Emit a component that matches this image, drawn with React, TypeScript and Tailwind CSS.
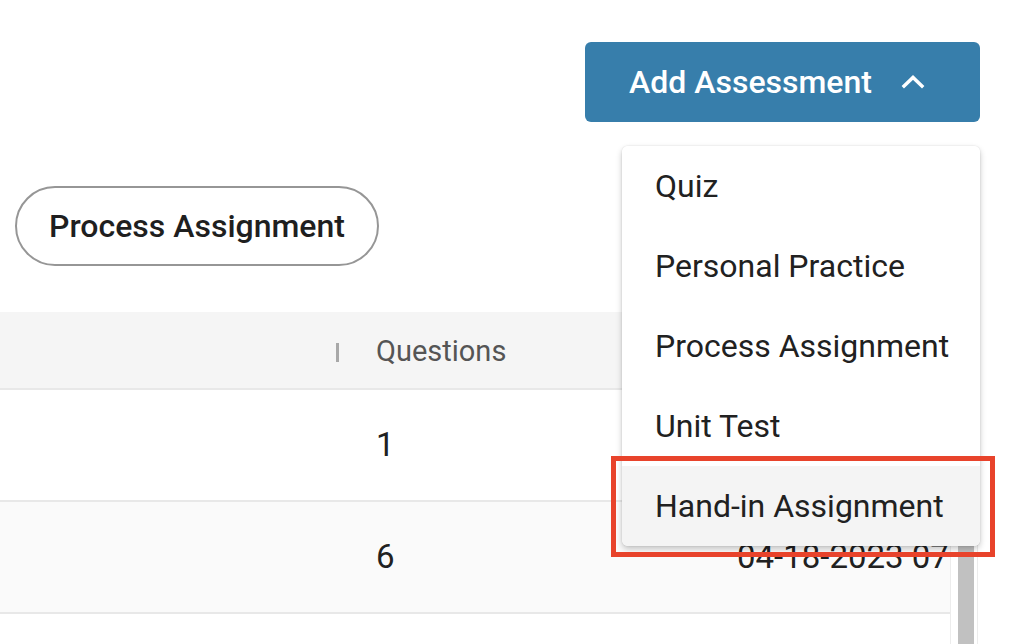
import { useState } from 'react';

const menuItems = ['Quiz', 'Personal Practice', 'Process Assignment', 'Unit Test', 'Hand-in Assignment'];

const rows = [
  { id: 1, questions: 1, created: '04-20-2023 10:15 AM', bg: 'bg-white' },
  { id: 2, questions: 6, created: '04-18-2023 07:42 PM', bg: 'bg-[#fafafa]' },
  { id: 3, questions: 3, created: '04-11-2023 09:05 AM', bg: 'bg-white' },
];

const App = () => {
  const [active, setActive] = useState(4);

  return (
    <div className="relative w-full h-[644px] overflow-hidden bg-white font-['Roboto','Liberation_Sans',sans-serif] text-[#212121]">
      {/* Top bar with the add menu */}
      <div className="flex justify-end pt-[42px] pr-[48px]">
        <div className="relative">
          <button className="flex items-center w-[395px] h-[80px] pl-[44px] rounded-[6px] bg-[#377eab] text-white text-[32px] font-medium">
            <span>Add Assessment</span>
            <svg className="ml-[29px]" width="24" height="14" viewBox="0 0 24 14" fill="none">
              <path d="M1.8 12.2 L12 2.4 L22.2 12.2" stroke="white" strokeWidth="3.4" />
            </svg>
          </button>

          {/* Dropdown */}
          <div className="absolute top-[104px] right-0 z-10 w-[358px] rounded-[6px] bg-white overflow-hidden shadow-[0_3px_6px_rgba(0,0,0,0.22),0_0_2px_rgba(0,0,0,0.12)]">
            {menuItems.map((item, i) => (
              <div
                key={item}
                onMouseEnter={() => setActive(i)}
                className={`flex items-center h-[80px] pl-[33px] text-[32px] ${i === active ? 'bg-[#f4f4f4]' : 'bg-white'}`}
              >
                {item}
              </div>
            ))}
          </div>
        </div>
      </div>

      {/* Filter pill */}
      <div className="mt-[64px] ml-[15px]">
        <button className="flex items-center justify-center w-[364px] h-[80px] rounded-full border-2 border-[#969696] text-[32px] font-medium text-[#1f1f1f]">
          Process Assignment
        </button>
      </div>

      {/* Table */}
      <div className="flex mt-[46px] w-[978px]">
        <div className="w-[950px] shrink-0 overflow-hidden">
          <div className="flex h-[78px] bg-[#f5f5f5] border-b-2 border-[#e8e8e8]">
            <div className="flex items-center justify-end shrink-0 w-[350px] pr-[11px]">
              <div className="w-[3px] h-[19px] mt-[4px] bg-[#a8a8a8]" />
            </div>
            <div className="flex items-center shrink-0 w-[361px] pl-[26px] pt-[4px] text-[29px] text-[#555]">Questions</div>
            <div className="flex items-center shrink-0 pl-[26px] pt-[4px] text-[29px] text-[#555] whitespace-nowrap">Created</div>
          </div>
          {rows.map((r) => (
            <div key={r.id} className={`flex h-[112px] border-b-2 border-[#e8e8e8] ${r.bg}`}>
              <div className="shrink-0 w-[350px]" />
              <div className="flex items-center shrink-0 w-[361px] pl-[26px] text-[33px]">{r.questions}</div>
              <div className="flex items-center shrink-0 pl-[26px] text-[33px] whitespace-nowrap">{r.created}</div>
            </div>
          ))}
        </div>
        {/* Scrollbar */}
        <div className="w-[28px] shrink-0 border-l border-r border-[#ececec] bg-white">
          <div className="ml-[7px] mt-[200px] w-[16px] h-[300px] bg-[#c1c1c1]" />
        </div>
      </div>

      {/* Annotation highlight */}
      <div className="absolute left-[611px] top-[456px] w-[384px] h-[101px] border-[5px] border-[#e8432b] z-20 pointer-events-none" />
    </div>
  );
};

export default App;
